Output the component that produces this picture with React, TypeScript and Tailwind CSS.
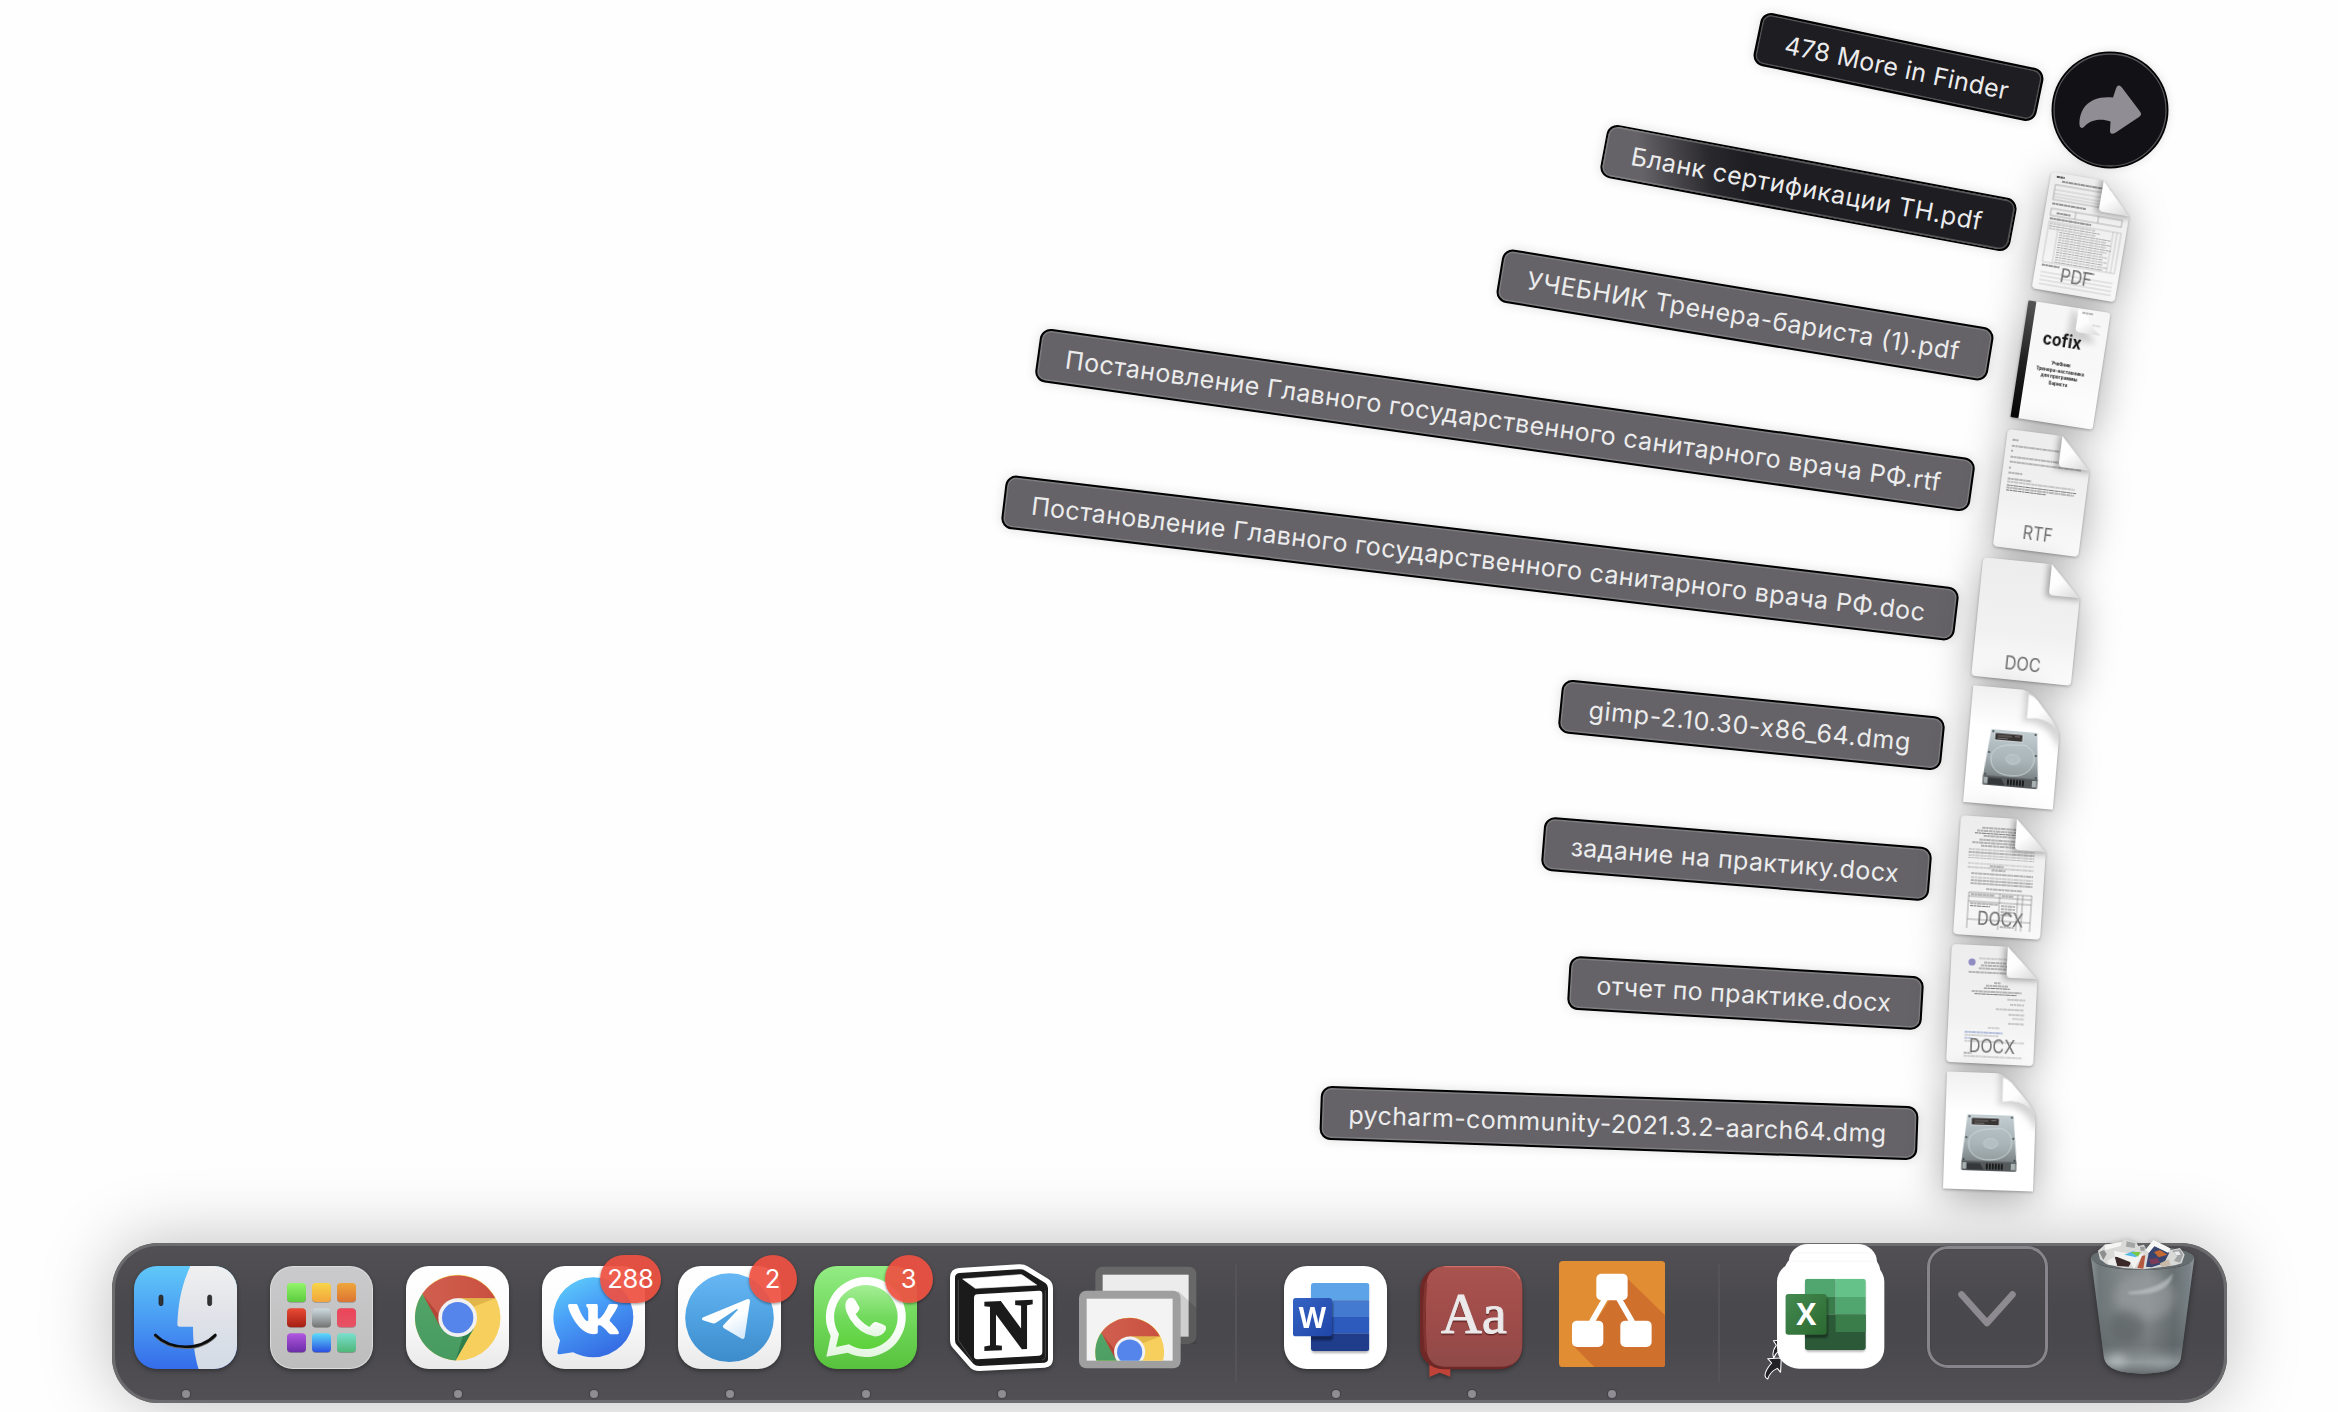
import { useLayoutEffect, useRef, useState, type ReactNode } from "react";
import { FaVk } from "react-icons/fa";

/* ---------- Stack labels ---------- */

type StackLabel = { text: string; box: string; tone: string; fit: number };

const GREY = "bg-[#656368]";
const DARK = "bg-[#1e1d22]";
const FADE = "bg-[linear-gradient(72deg,#656368_10%,#4c4a4f_17%,#29282d_27%,#1e1d22_36%)]";

const labels: StackLabel[] = [
  { text: "478 More in Finder", box: "left-[1754px] top-[40px] w-[289px] rotate-[11.8deg]", tone: DARK, fit: 228 },
  { text: "Бланк сертификации ТН.pdf", box: "left-[1600px] top-[161px] w-[417px] rotate-[10.6deg]", tone: FADE, fit: 357 },
  { text: "УЧЕБНИК Тренера-бариста (1).pdf", box: "left-[1496px] top-[288px] w-[498px] rotate-[9.35deg]", tone: GREY, fit: 438 },
  { text: "Постановление Главного государственного санитарного врача РФ.rtf", box: "left-[1033px] top-[393px] w-[944px] rotate-[8deg]", tone: GREY, fit: 884 },
  { text: "Постановление Главного государственного санитарного врача РФ.doc", box: "left-[1000px] top-[531px] w-[960px] rotate-[6.8deg]", tone: GREY, fit: 900 },
  { text: "gimp-2.10.30-x86_64.dmg", box: "left-[1559px] top-[698px] w-[385px] rotate-[5.7deg]", tone: GREY, fit: 324 },
  { text: "задание на практику.docx", box: "left-[1542px] top-[831.500px] w-[389px] rotate-[4.6deg]", tone: GREY, fit: 329 },
  { text: "отчет по практике.docx", box: "left-[1568px] top-[966px] w-[355px] rotate-[3.4deg]", tone: GREY, fit: 295 },
  { text: "pycharm-community-2021.3.2-aarch64.dmg", box: "left-[1320px] top-[1096px] w-[598px] rotate-[2deg]", tone: GREY, fit: 538 },
];

/* Spreads a single line of text over an exact width through its letter spacing. */
function FitText({ text, width }: { text: string; width: number }) {
  const ref = useRef<HTMLSpanElement>(null);
  const [spacing, setSpacing] = useState(0);
  useLayoutEffect(() => {
    const el = ref.current;
    if (el) setSpacing((width - el.offsetWidth) / text.length);
  }, [text, width]);
  return (
    <span ref={ref} className="whitespace-nowrap leading-none" style={{ letterSpacing: `${spacing}px` }}>
      {text}
    </span>
  );
}

function Label({ text, box, tone, fit }: StackLabel) {
  return (
    <div
      className={`absolute flex h-[54px] items-center justify-center rounded-[11px] border-2 border-black pr-[3px] pt-[2px] text-[25px] text-[#ececed] shadow-[inset_0_0_0_1.5px_rgba(160,160,160,0.42),0_0_12px_rgba(0,0,0,0.12)] ${box} ${tone}`}
    >
      <FitText text={text} width={fit} />
    </div>
  );
}

/* ---------- Stack files ---------- */

function File({ box, w, h, children }: { box: string; w: number; h: number; children: ReactNode }) {
  return (
    <div className={`absolute -ml-px ${box}`}>
      <svg
        viewBox={`0 0 ${w} ${h}`}
        className="block h-full w-full overflow-visible [filter:drop-shadow(0_1px_1.5px_rgba(0,0,0,0.3))_drop-shadow(0_8px_20px_rgba(0,0,0,0.34))]"
      >
        {children}
      </svg>
    </div>
  );
}

function Sheet({ w, h, f = 31, children }: { w: number; h: number; f?: number; children?: ReactNode }) {
  const clip = `sheet-${w}-${h}`;
  const outline = `M4 0H${w - f}L${w} ${f}V${h - 4}Q${w} ${h} ${w - 4} ${h}H4Q0 ${h} 0 ${h - 4}V4Q0 0 4 0Z`;
  return (
    <>
      <defs>
        <clipPath id={clip}>
          <path d={outline} />
        </clipPath>
      </defs>
      <path d={outline} fill="url(#paper)" />
      <g clipPath={`url(#${clip})`}>
        {children}
        <path d={`M${w - f - 3} -4V${f + 2}H${w + 4}Z`} fill="#000" opacity="0.32" filter="url(#soft)" />
      </g>
      <path d={`M${w - f} 0V${f - 4}Q${w - f} ${f} ${w - f + 4} ${f}H${w}Z`} fill="url(#fold)" />
    </>
  );
}

type Row = [number, number, number, number?];

function Rows({ rows, color = "#444", weight = 1.1 }: { rows: Row[]; color?: string; weight?: number }) {
  return (
    <g stroke={color} strokeWidth={weight}>
      {rows.map(([x, y, w, o], i) => (
        <line key={i} x1={x} x2={x + w} y1={y} y2={y} opacity={o ?? 0.7} strokeDasharray="3.5 0.5 2 0.5 5 0.6" />
      ))}
    </g>
  );
}

function Ext({ x, y, w, children }: { x: number; y: number; w: number; children: string }) {
  return (
    <text x={x - w / 2} y={y} textLength={w} lengthAdjust="spacingAndGlyphs" fontSize="18" fill="#6e6e6e" className="font-['Inter']">
      {children}
    </text>
  );
}

function DiskImage() {
  const sheet = "M0 0H46Q57 0 65 9L82 28Q90 37 90 48V117H0Z";
  return (
    <>
      <clipPath id="disk-sheet">
        <path d={sheet} />
      </clipPath>
      <path d={sheet} fill="#fff" />
      <g clipPath="url(#disk-sheet)">
        <rect width="90" height="40" fill="url(#curl)" />
        <path d="M52 -2Q54 22 52 32Q76 28 92 58L96 30L60 -6Z" fill="#000" opacity="0.16" filter="url(#soft)" />
      </g>
      <path d="M56 4V29Q76 24 88 39L82 28L65 9Q61 5 56 4Z" fill="url(#fold)" stroke="#d5d5d5" strokeWidth="0.7" />
      <path d="M22 42H68L72.500 89H17.500Z" fill="url(#drive)" />
      <path d="M17.500 88.500H72.500V96.500Q72.500 98 71 98H19Q17.500 98 17.500 96.500Z" fill="#55595b" />
      <path d="M22.500 90.500H36L40 97H22.500Z" fill="#34383a" />
      <rect x="18.500" y="90" width="4" height="6.500" fill="#a9b1b3" />
      <rect x="67" y="90" width="4.500" height="6.500" fill="#a9b1b3" />
      <g fill="#17191a">
        {[42, 45, 48, 51, 54, 57].map((x) => (
          <rect key={x} x={x} y="90.500" width="1.900" height="6" />
        ))}
      </g>
      <rect x="26" y="45" width="28" height="7.500" fill="#3a3535" stroke="#e2eaec" strokeWidth="0.8" />
      <path d="M29 48H43M29 50.500H39M46 47.500H51" stroke="#8c8988" strokeWidth="0.7" />
      <path
        d="M24 72C23 61 34 56 47 56C52 56 58 54 60 57C67 60 67.500 67 67 72C65 82 56 87 45 87C33 87 25 82 24 72Z"
        fill="#b4c0c4"
        fillOpacity="0.4"
        stroke="#cfdadd"
        strokeWidth="0.9"
      />
      <ellipse cx="46" cy="70.500" rx="7.200" ry="5" fill="#b3bfc2" stroke="#c9d4d7" strokeWidth="0.6" />
      <g fill="#3e484c">
        {[[24, 44], [66.500, 44], [21.500, 65], [68.500, 65], [19.500, 87], [70.500, 87]].map(([x, y]) => (
          <circle key={`${x}-${y}`} cx={x} cy={y} r="1.100" />
        ))}
      </g>
    </>
  );
}

function Files() {
  return (
    <>
      <File box="left-[2042px] top-[178px] h-[118px] w-[84px] rotate-[9.7deg]" w={84} h={118}>
        <Sheet w={84} h={118}>
          <Rows rows={[[6, 4, 8, 0.9]]} color="#111" weight={1.5} />
          <Rows rows={[[12, 8, 50, 0.9], [6, 31, 34, 0.9], [12, 40, 14, 0.9], [6, 46, 42, 0.9], [6, 93, 18, 0.9], [48, 94, 12, 0.8]]} color="#222" weight={1.2} />
          <g fill="none" stroke="#8a8a8a" strokeWidth="0.6">
            <rect x="6" y="12" width="62" height="15" />
            <path d="M6 17H68M6 21H68M6 24H68" opacity="0.6" />
            <rect x="6" y="36" width="72" height="7" />
            <path d="M31 36V43M54 36V43" />
            <rect x="6" y="49" width="73" height="41" opacity="0.6" />
            <path d="M16 57V90M71 49V90M75 49V90" opacity="0.6" />
            <path d="M6 100H79M6 104H79M6 108H79M6 112H79" opacity="0.6" />
          </g>
          <Rows rows={[51, 53.5, 56, 58.5, 61, 63.5, 66, 68.5, 71, 73.5, 76, 78.5, 81, 83.5, 86, 88.5].map((y, i): Row => [i > 2 ? 18 : 7, y, 46 + ((i * 5) % 9), 0.4])} />
          <Ext x={42} y={107} w={32}>PDF</Ext>
        </Sheet>
      </File>

      <File box="left-[2020px] top-[305.500px] h-[118px] w-[83px] rotate-[8.8deg]" w={83} h={118}>
        <rect width="83" height="118" rx="3" fill="url(#cover)" />
        <rect width="8" height="118" rx="1" fill="url(#spine)" />
        <path d="M45 0L73 33H43Z" fill="#000" opacity="0.16" filter="url(#soft)" />
        <text x="20" y="41" textLength="39" lengthAdjust="spacingAndGlyphs" fontSize="18" fontWeight="700" fill="#161616" className="font-['Inter']">
          cofix
        </text>
        <path d="M51 0V20Q51 24 55 24H77Q66 18 62 8Z" fill="url(#fold)" />
        <Rows rows={[[55, 4, 11, 0.7], [67, 15, 8, 0.3]]} />
        <g fontSize="4.600" fontWeight="700" fill="#1c1c1c" textAnchor="middle" className="font-['Inter']">
          <text x="42" y="60">Учебник</text>
          <text x="42" y="66.500">Тренера-наставника</text>
          <text x="42" y="73">для программы</text>
          <text x="42" y="79.500">Бариста</text>
        </g>
      </File>

      <File box="left-[2001px] top-[434px] h-[118px] w-[86px] rotate-[7.3deg]" w={86} h={118}>
        <Sheet w={86} h={118}>
          <Rows rows={[[6, 10, 6, 0.8], [6, 16, 48], [6, 21, 2], [6, 27, 50], [6, 32, 72], [6, 38, 2], [6, 43, 14], [6, 49, 24], [6, 52, 68, 0.5], [6, 55.5, 70, 0.7], [6, 58, 68, 0.7], [6, 60.5, 40, 0.7]]} />
          <Ext x={43} y={107.5} w={30}>RTF</Ext>
        </Sheet>
      </File>

      <File box="left-[1977.500px] top-[561.500px] h-[119px] w-[100px] rotate-[5.8deg]" w={100} h={119}>
        <Sheet w={100} h={119}>
          <Ext x={50} y={108.5} w={36}>DOC</Ext>
        </Sheet>
      </File>

      <File box="left-[1969px] top-[688.500px] h-[117px] w-[90px] rotate-[5deg]" w={90} h={117}>
        <DiskImage />
      </File>

      <File box="left-[1958px] top-[817.500px] h-[119px] w-[87px] rotate-[3.800deg]" w={87} h={119}>
        <Sheet w={87} h={119}>
          <Rows rows={[[22, 11, 34], [17, 14, 40], [15, 16.500, 42], [24, 19, 32], [20, 23, 36], [13, 26, 44], [22, 29, 34], [10, 33, 66, 0.4], [10, 36, 66, 0.7], [10, 39, 66, 0.4], [10, 41.500, 66, 0.3], [10, 47, 66, 0.3], [32, 49, 14], [10, 51, 66, 0.4], [34, 53, 14], [14, 57, 62], [14, 61, 62, 0.4], [14, 64, 62, 0.7], [14, 67, 62], [30, 72, 36, 0.7]]} />
          <g fill="none" stroke="#777" strokeWidth="0.6">
            <path d="M13 76H76M13 80H76M13 85H76M13 112V76M44 76V112M62 76V112M67 76V112M76 76V112M13 103H76" />
          </g>
          <Rows rows={[[15, 78, 24], [46, 78, 12], [15, 87, 28], [15, 89.500, 20], [46, 88, 14], [46, 91, 14], [46, 94, 14], [46, 97, 12], [46, 109, 14]]} />
          <Ext x={46} y={108} w={46}>DOCX</Ext>
        </Sheet>
      </File>

      <File box="left-[1950px] top-[946px] h-[118px] w-[87px] rotate-[2.800deg]" w={87} h={118}>
        <Sheet w={87} h={118}>
          <circle cx="21" cy="17" r="3.600" fill="#8f8cc4" />
          <Rows rows={[[28, 13, 28, 0.4], [33, 17, 22], [30, 20, 26], [28, 23, 28], [18, 27, 40], [44, 37, 7], [36, 40, 22], [34, 42.500, 26], [22, 46, 50], [25, 48.500, 42], [58, 53, 18, 0.5], [61, 58, 14, 0.5], [47, 63, 28, 0.5], [60, 68, 16, 0.5], [64, 72, 12, 0.4], [60, 77, 16, 0.5], [40, 82, 12, 0.4]]} />
          <Rows rows={[[17, 87, 38, 0.9], [17, 93, 8, 0.7]]} color="#5d78b8" />
          <Rows rows={[[17, 90, 34, 0.4], [17, 96, 60, 0.4], [17, 108, 8, 0.7], [17, 111, 58, 0.4]]} />
          <Ext x={45} y={107.5} w={46}>DOCX</Ext>
        </Sheet>
      </File>

      <File box="left-[1945.500px] top-[1072.500px] h-[117px] w-[90px] rotate-[1.950deg]" w={90} h={117}>
        <DiskImage />
      </File>
    </>
  );
}

function MoreButton() {
  return (
    <svg viewBox="0 0 118 118" className="absolute left-[2051px] top-[51px] h-[118px] w-[118px] overflow-visible [filter:drop-shadow(0_0_4px_rgba(0,0,0,0.12))]">
      <circle cx="59" cy="59" r="58.500" fill="#000" />
      <circle cx="59" cy="59" r="56" fill="#121116" stroke="#55545a" strokeWidth="1.300" />
      <path
        d="M28.500 74C28 58 38 44 62 46.500L65 37.500Q66.500 32.500 70.500 36L89 60.500Q91.500 63.500 88 66L64 82Q59 84.500 59 79.500L59.500 70.500C49 67 39 69 33 76Q29 78.500 28.500 74Z"
        fill="#908e94"
      />
    </svg>
  );
}

/* ---------- Dock icons ---------- */

const tile = "block h-[103px] w-[103px] overflow-visible [filter:drop-shadow(0_2px_2px_rgba(0,0,0,0.35))]";

function Finder() {
  return (
    <svg viewBox="104 139 309 309" className={tile}>
      <clipPath id="finder-tile"><rect x="104" y="139" width="309" height="309" rx="69" /></clipPath>
      <g clipPath="url(#finder-tile)">
        <rect x="104" y="139" width="309" height="309" fill="url(#finder-blue)" />
        <path d="M273 139C250 190 237 240 234 314Q234 321 240 321H281C281 370 286 410 298 449H414V139Z" fill="url(#finder-white)" />
      </g>
      <g fill="#333" stroke="#1a1a1a" strokeWidth="2">
        <rect x="179" y="226" width="12" height="32" rx="6" />
        <rect x="325" y="226" width="12" height="32" rx="6" />
      </g>
      <path d="M168 349C215 396 303 396 348 349" fill="none" stroke="#6c6c6c" strokeWidth="8" strokeLinecap="round" />
      <path d="M168 346C215 393 303 393 348 346" fill="none" stroke="#0c0c0c" strokeWidth="8" strokeLinecap="round" />
    </svg>
  );
}

const padColors = [
  ["#93f46c", "#5ccc3e"], ["#f8d548", "#f2a53c"], ["#efa63a", "#db7433"],
  ["#ea4b35", "#a41f14"], ["#cfdce2", "#747574"], ["#ec4459", "#e55465"],
  ["#b157e0", "#6b2da8"], ["#5cdbfa", "#2a4ee0"], ["#79dfcd", "#4fb678"],
];

function Launchpad() {
  return (
    <svg viewBox="512 139 309 309" className={tile}>
      <rect x="512" y="139" width="309" height="309" rx="69" fill="#dcdcdc" />
      <rect x="515" y="142" width="303" height="303" rx="66" fill="url(#pad)" />
      {padColors.map(([a, b], i) => {
        const x = 563 + (i % 3) * 75;
        const y = 190 + Math.floor(i / 3) * 75.5;
        return (
          <g key={a}>
            <linearGradient id={`pad-${i}`} x2="0" y2="1">
              <stop stopColor={a} />
              <stop offset="1" stopColor={b} />
            </linearGradient>
            <rect x={x} y={y + 2} width="57" height="57" rx="12" fill="#000" opacity="0.25" />
            <rect x={x} y={y} width="57" height="57" rx="12" fill={`url(#pad-${i})`} />
          </g>
        );
      })}
    </svg>
  );
}

function ChromeDisc() {
  return (
    <>
      <circle cx="1074" cy="294" r="128.500" fill="#f7cf5d" />
      <path d="M1187 236A128.500 128.500 0 0 0 968 222L1024 323L1074 236Z" fill="url(#chrome-red)" />
      <path d="M968 222A128.500 128.500 0 0 0 1068 422.500L1124 323L1024 323Z" fill="url(#chrome-green)" />
      <path d="M1074 236H1187L1120 262Z" fill="#d9aa41" opacity="0.7" />
      <path d="M968 222L1020 320L1017 285Z" fill="#9c3226" opacity="0.55" />
      <path d="M1068 422L1122 327L1090 348Z" fill="#1f6a3c" opacity="0.6" />
      <circle cx="1074" cy="294" r="58" fill="#f1f1f1" />
      <circle cx="1074" cy="294" r="47" fill="#5585ea" />
    </>
  );
}

function Chrome() {
  return (
    <svg viewBox="919 139 309 309" className={tile}>
      <rect x="919" y="139" width="309" height="309" rx="69" fill="url(#white)" />
      <ChromeDisc />
    </svg>
  );
}

function Vk() {
  return (
    <svg viewBox="68 139 309 309" className={tile}>
      <rect x="68" y="139" width="309" height="309" rx="69" fill="url(#white)" />
      <path d="M102 293A120 120 0 1 1 222 413Q190 413 161 398L122 404Q112 405 115 394L122 362Q102 330 102 293Z" fill="url(#vk)" />
      <FaVk x={141} y={217} size={163} color="#fff" />
    </svg>
  );
}

function Telegram() {
  return (
    <svg viewBox="476 139 309 309" className={tile}>
      <rect x="476" y="139" width="309" height="309" rx="69" fill="url(#white)" />
      <circle cx="630.500" cy="294" r="133" fill="url(#tg)" />
      <path
        d="M552 293L683 239Q692 236 692 245L676 352Q674 361 665 356L614 326Q608 322 612 317L655 271Q656 267 651 269L590 309Q584 313 577 310L551 302Q544 298 552 293Z"
        fill="url(#plane)"
      />
    </svg>
  );
}

function WhatsApp() {
  return (
    <svg viewBox="884 139 309 309" className={tile}>
      <rect x="884" y="139" width="309" height="309" rx="69" fill="url(#wa)" />
      <path d="M1040 172A120 120 0 1 1 985 399L921 411L934 349A120 120 0 0 1 1040 172Z" fill="url(#wa-ring)" />
      <path d="M1040 196A96 96 0 1 1 989 374L950 382L959 343A96 96 0 0 1 1040 196Z" fill="url(#wa-in)" />
      <path
        d="M988 236Q1003 230 1009 243L1020 263Q1023 270 1009 283Q1022 306 1050 322Q1059 310 1066 307Q1073 305 1098 318Q1103 324 1097 335Q1086 352 1064 350Q1020 342 992 298Q971 262 981 244Z"
        fill="url(#wa-ring)"
      />
    </svg>
  );
}

function Notion() {
  const cube =
    "M107 174Q107 162 120 160L298 149Q310 148 318 153L378 190Q386 196 386 205V418Q386 428 375 429L180 439Q168 439 162 432L112 375Q107 370 107 360Z";
  return (
    <svg viewBox="92 139 309 309" className={tile}>
      <path d={cube} fill="#fff" stroke="#fff" strokeWidth="30" strokeLinejoin="round" />
      <path d={cube} fill="#1b1b1b" />
      <path d="M117 180V362L160 424" fill="none" stroke="#4a4a4a" strokeWidth="3" />
      <path d="M130 178L300 165Q306 164 312 168L352 196L168 206Z" fill="#fff" stroke="#fff" strokeWidth="2" strokeLinejoin="round" />
      <path d="M174 224L359 213Q369 212 369 223V397Q369 407 359 408L174 419Q164 419 164 409V235Q164 225 174 224Z" fill="#fff" />
      <path d="M378 212V412Q377 420 368 421" fill="none" stroke="#4a4a4a" strokeWidth="3" />
      <text x="0" y="0" transform="translate(194 391) skewY(-2.500)" fontSize="216" fontWeight="700" textLength="146" lengthAdjust="spacingAndGlyphs" fill="#1b1b1b" stroke="#1b1b1b" strokeWidth="6" className="font-['Liberation_Serif']">
        N
      </text>
    </svg>
  );
}

function RemoteDesktop() {
  return (
    <svg viewBox="478 139 352 309" className="block h-[103px] w-[117.300px] overflow-visible">
      <rect x="527" y="141" width="303" height="232" rx="22" fill="#686868" />
      <rect x="549" y="165" width="258" height="186" fill="#ececec" />
      <path d="M775 213L830 265V373H783Z" fill="#000" opacity="0.12" />
      <rect x="478" y="213" width="305" height="233" rx="22" fill="#9f9f9f" />
      <rect x="501" y="237" width="258" height="186" fill="#f3f3f3" />
      <clipPath id="remote-screen"><rect x="501" y="237" width="258" height="186" /></clipPath>
      <g clipPath="url(#remote-screen)">
        <g transform="translate(630 397) scale(0.805) translate(-1074 -294)">
          <ChromeDisc />
        </g>
      </g>
    </svg>
  );
}

function Word() {
  return (
    <svg viewBox="73 139 309 309" className={tile}>
      <rect x="73" y="139" width="309" height="309" rx="69" fill="#fff" />
      <clipPath id="word-page"><rect x="154" y="190" width="175" height="204" rx="8" /></clipPath>
      <rect x="156" y="196" width="171" height="204" rx="8" fill="#000" opacity="0.3" filter="url(#soft)" />
      <g clipPath="url(#word-page)">
        <rect x="154" y="190" width="175" height="52" fill="#5da3e8" />
        <rect x="154" y="242" width="175" height="50" fill="#447ad0" />
        <rect x="154" y="292" width="175" height="50" fill="#2d5abd" />
        <rect x="154" y="342" width="175" height="52" fill="#203d8c" />
        <rect x="108" y="244" width="112" height="118" rx="10" fill="#000" opacity="0.4" filter="url(#soft)" />
      </g>
      <rect x="100" y="235" width="117" height="115" rx="8" fill="url(#word-tab)" />
      <text x="117.500" y="324" fontSize="88" fontWeight="700" textLength="82" lengthAdjust="spacingAndGlyphs" fill="#fff" className="font-['Open_Sans']">
        W
      </text>
    </svg>
  );
}

function Dictionary() {
  return (
    <svg viewBox="482 139 309 309" className={tile}>
      <path d="M510 430H573V471L541 459L510 472Z" fill="#bf4338" />
      <rect x="482" y="141" width="307" height="308" rx="69" fill="#6f2826" />
      <path d="M553 139H720Q789 139 789 208V372Q789 441 720 441H553Q500 436 500 372V208Q500 145 553 139Z" fill="url(#leather)" />
      <path d="M555 141H720Q765 141 781 178" fill="none" stroke="#d9716c" strokeWidth="3" />
      <path d="M500 190Q490 290 500 395" fill="none" stroke="#823431" strokeWidth="8" />
      <g fontSize="168" strokeWidth="3" className="font-['Liberation_Serif']">
        <text x="545" y="341" textLength="198" lengthAdjust="spacingAndGlyphs" fill="#ebe9e9" stroke="#ebe9e9" className="[filter:drop-shadow(0_4px_1px_#5f2220)]">
          Aa
        </text>
      </g>
    </svg>
  );
}

function DrawIo() {
  return (
    <svg viewBox="897 122 319 319" className="-mt-[5.500px] block h-[106.300px] w-[106.300px]">
      <clipPath id="drawio-tile"><rect x="897" y="122" width="319" height="319" rx="12" /></clipPath>
      <g clipPath="url(#drawio-tile)">
        <rect x="897" y="122" width="319" height="319" fill="#e08d33" />
        <path d="M1100 172L1216 286V441H1004L940 376L1010 300L1060 220Z" fill="#cf702d" />
      </g>
      <path d="M1041 225L995 305M1071 225L1117 305" stroke="#fff" strokeWidth="17" />
      <rect x="1009" y="160" width="94" height="80" rx="15" fill="#fff" />
      <rect x="936" y="301" width="94" height="79" rx="15" fill="#fff" />
      <rect x="1081" y="301" width="94" height="79" rx="15" fill="#fff" />
    </svg>
  );
}

function ExcelStack() {
  return (
    <svg viewBox="242 132 301 375" preserveAspectRatio="none" className="block h-[125px] w-[107.500px] overflow-visible">
      <g fill="#222125" stroke="#fff" strokeWidth="3" strokeLinejoin="round">
        <path d="M232 422L262 420V470L248 452Q238 460 233 474Q226 455 240 436Z" />
        <path d="M216 476L254 474L252 517L243 505Q222 515 216 537Q202 532 214 508Q220 497 227 489Z" />
      </g>
      <rect x="275" y="132" width="247" height="220" rx="54" fill="#fff" />
      <rect x="262" y="157" width="270" height="220" rx="62" fill="#fff" />
      <rect x="242" y="184" width="300.500" height="322" rx="62" fill="#fff" />
      <path d="M300 158H500M285 184H515" stroke="#f4f4f4" strokeWidth="2" />
      <clipPath id="excel-page"><rect x="320" y="236" width="170.500" height="214" rx="8" /></clipPath>
      <rect x="322" y="243" width="167" height="212" rx="8" fill="#000" opacity="0.3" filter="url(#soft)" />
      <g clipPath="url(#excel-page)">
        <rect x="320" y="236" width="86" height="55" fill="#51a56e" />
        <rect x="406" y="236" width="85" height="55" fill="#65c38a" />
        <rect x="320" y="291" width="86" height="53" fill="#3a7c4a" />
        <rect x="406" y="291" width="85" height="53" fill="#51a56e" />
        <rect x="320" y="344" width="171" height="106" fill="#2c5a39" />
        <rect x="406" y="344" width="85" height="52" fill="#3a7c4a" />
        <rect x="275" y="292" width="110" height="122" rx="10" fill="#000" opacity="0.4" filter="url(#soft)" />
      </g>
      <rect x="266" y="282" width="115" height="122" rx="8" fill="url(#excel-tab)" />
      <text x="296" y="376" fontSize="92" fontWeight="700" textLength="56" lengthAdjust="spacingAndGlyphs" fill="#fff" className="font-['Open_Sans']">
        X
      </text>
    </svg>
  );
}

function DownloadsStack() {
  return (
    <div className="flex h-[122px] w-[121px] items-center justify-center rounded-[21px] border-[3px] border-[#87858b] shadow-[0_0_1px_#29282b,inset_0_0_1px_#29282b]">
      <svg viewBox="0 0 58 36" className="mt-[3px] h-[36px] w-[58px] overflow-visible" fill="none" stroke="#8d8b91" strokeWidth="6.500" strokeLinecap="round" strokeLinejoin="round">
        <path d="M3.500 3.500L29 32L54.500 3.500" />
      </svg>
    </div>
  );
}

function Trash() {
  const bin = "M33 84L72 385Q82 431 188 431Q294 431 303 385L343 84Q330 118 188 120Q46 118 33 84Z";
  return (
    <svg viewBox="33 27 310 404" className="block h-[134.700px] w-[103.300px] overflow-visible [filter:drop-shadow(0_2px_3px_rgba(0,0,0,0.4))]">
      <ellipse cx="188" cy="84" rx="155" ry="36" fill="#666d70" />
      <clipPath id="bin-shape"><path d={bin} /></clipPath>
      <path d={bin} fill="url(#bin)" />
      <g clipPath="url(#bin-shape)">
        <path d={bin} fill="url(#bin-v)" />
        <ellipse cx="195" cy="200" rx="90" ry="70" fill="#9da2a3" opacity="0.55" filter="url(#wide)" />
        <path d="M145 186Q245 175 280 128Q270 200 145 192Z" fill="#c4c9ca" opacity="0.6" filter="url(#soft)" />
        <ellipse cx="140" cy="290" rx="50" ry="50" fill="#4e5353" opacity="0.4" filter="url(#wide)" />
        <ellipse cx="110" cy="392" rx="30" ry="16" fill="#c9cfd1" opacity="0.7" filter="url(#wide)" />
        <ellipse cx="250" cy="400" rx="36" ry="12" fill="#a5adb0" opacity="0.6" filter="url(#wide)" />
      </g>
      <path d="M54 62L74 44L125 36L135 27L170 38L175 48L192 44L198 58L220 30L265 52L272 60L300 54L314 74L305 100L285 106L240 112L190 118L130 114L80 103L60 88Z" fill="#d9d9d8" />
      <path d="M58 66L72 60L80 72L70 90Z" fill="#8b8d8e" />
      <path d="M74 44L125 36L122 48L76 60Z" fill="#f5f5f4" />
      <path d="M104 82L128 76L154 96L146 110L112 108Z" fill="#3b2929" />
      <path d="M102 62L176 76L192 68L162 116L150 96L104 78Z" fill="#f2f2f1" />
      <path d="M133 74L158 64L180 68L168 82Z" fill="#58b9e8" />
      <path d="M152 66L182 66L174 80Z" fill="#7bc845" />
      <path d="M172 114L186 78L196 76L190 116Z" fill="#b4583f" />
      <path d="M140 34L166 40L164 54L138 50Z" fill="#a4a5a5" />
      <path d="M180 50H194V62H182Z" fill="#9b9b9b" />
      <path d="M198 110L206 70L222 48L268 68L252 100L215 112Z" fill="#39456f" />
      <path d="M222 66L240 60L262 74L236 82Z" fill="#c66a34" />
      <path d="M206 88L232 84L240 98L214 104Z" fill="#7a3c56" />
      <path d="M220 30L272 56L264 68L224 48L206 68L198 60Z" fill="#f7f7f6" />
      <path d="M240 100L266 88L272 106L244 112Z" fill="#c9b9a8" />
      <path d="M276 62L300 58L310 74L300 98L282 92L292 78Z" fill="#a2a4a5" />
      <path d="M282 66L296 64L302 74L290 76Z" fill="#ededed" />
      <path d="M82 92L104 80L110 106L86 104Z" fill="#ededec" />
    </svg>
  );
}

/* ---------- Dock ---------- */

function Badge({ children }: { children: string }) {
  return (
    <span className="absolute -right-[15.500px] -top-[11.500px] flex h-[48px] min-w-[48px] items-center justify-center rounded-full bg-[#ee5142]/93 px-[7px] text-[25.500px] leading-none tracking-[-0.3px] text-white shadow-[0_1px_3px_rgba(0,0,0,0.45)]">
      {children}
    </span>
  );
}

function Cell({ running, badge, children }: { running?: boolean; badge?: string; children: ReactNode }) {
  return (
    <div className="flex h-[160px] flex-col items-center pt-[23px]">
      <div className="relative flex h-[103px] items-start">
        {children}
        {badge && <Badge>{badge}</Badge>}
      </div>
      {running && <span className="mt-[21px] h-[8px] w-[8px] rounded-full bg-[#8f8d94] shadow-[0_0_1px_1px_rgba(50,48,54,0.5)]" />}
    </div>
  );
}

function Separator() {
  return <div className="mt-[21px] h-[118px] w-[2px] bg-[#555358]" />;
}

function Dock() {
  return (
    <nav className="flex h-[160px] w-[2115px] items-start rounded-[46px] bg-[linear-gradient(#525055,#49484c_40%,#49484c_60%,#525055)] pl-[22.500px] shadow-[inset_0_0_0_3px_#6c6b6e,0_0_70px_rgba(0,0,0,0.26)]">
      <div className="flex gap-[33px]">
        <Cell running><Finder /></Cell>
        <Cell><Launchpad /></Cell>
        <Cell running><Chrome /></Cell>
        <Cell running badge="288"><Vk /></Cell>
        <Cell running badge="2"><Telegram /></Cell>
        <Cell running badge="3"><WhatsApp /></Cell>
        <Cell running><Notion /></Cell>
      </div>
      <div className="ml-[26px] flex">
        <Cell><RemoteDesktop /></Cell>
      </div>
      <div className="ml-[39px]"><Separator /></div>
      <div className="ml-[47px] flex gap-[33px]">
        <Cell running><Word /></Cell>
        <Cell running><Dictionary /></Cell>
      </div>
      <div className="ml-[35.500px]">
        <Cell running><DrawIo /></Cell>
      </div>
      <div className="ml-[52.500px]"><Separator /></div>
      <div className="ml-[57px] mt-[1px]"><ExcelStack /></div>
      <div className="ml-[42.500px] mt-[3px]"><DownloadsStack /></div>
      <div className="-mt-[4px] ml-[43.500px]"><Trash /></div>
    </nav>
  );
}

/* ---------- Shared paints ---------- */

function Grad({ id, stops, x2 = 0, y2 = 1 }: { id: string; stops: [number, string, number?][]; x2?: number; y2?: number }) {
  return (
    <linearGradient id={id} x1="0" y1="0" x2={x2} y2={y2}>
      {stops.map(([o, c, a], i) => (
        <stop key={i} offset={o} stopColor={c} stopOpacity={a ?? 1} />
      ))}
    </linearGradient>
  );
}

function Paints() {
  return (
    <svg className="absolute h-0 w-0" aria-hidden="true">
      <defs>
        <filter id="soft" x="-30%" y="-30%" width="160%" height="160%"><feGaussianBlur stdDeviation="3" /></filter>
        <filter id="wide" x="-100%" y="-100%" width="300%" height="300%"><feGaussianBlur stdDeviation="14" /></filter>
        <Grad id="paper" stops={[[0, "#ededed"], [0.6, "#f1f1f1"], [1, "#fcfcfc"]]} />
        <Grad id="cover" stops={[[0, "#f6f6f6"], [0.5, "#f8f8f8"], [1, "#ffffff"]]} />
        <Grad id="spine" stops={[[0, "#555"], [0.5, "#222"], [1, "#050505"]]} />
        <Grad id="fold" x2={0.8} stops={[[0, "#ffffff"], [0.5, "#fdfdfd"], [1, "#dedede"]]} />
        <Grad id="curl" stops={[[0, "#f0f0f0"], [1, "#ffffff"]]} />
        <Grad id="drive" stops={[[0, "#c3ced2"], [0.6, "#a3aeb2"], [1, "#7a8285"]]} />
        <Grad id="finder-blue" stops={[[0, "#60c8f8"], [0.5, "#4a9df3"], [1, "#356cea"]]} />
        <Grad id="finder-white" stops={[[0, "#f0f0f1"], [0.5, "#dfe2e8"], [1, "#d2dbe6"]]} />
        <Grad id="pad" stops={[[0, "#cacacc"], [1, "#bdbdbd"]]} />
        <Grad id="white" stops={[[0, "#ffffff"], [0.5, "#fbfbfb"], [1, "#e9e9e9"]]} />
        <Grad id="chrome-red" x2={1} y2={0} stops={[[0, "#d05f50"], [1, "#c95040"]]} />
        <Grad id="chrome-green" stops={[[0, "#52a468"], [1, "#479a60"]]} />
        <Grad id="vk" x2={0.5} stops={[[0, "#62d5fb"], [0.5, "#489df7"], [1, "#366fe4"]]} />
        <Grad id="tg" stops={[[0, "#68b7f5"], [0.5, "#4fa2e1"], [1, "#3d8bcb"]]} />
        <Grad id="plane" x2={0.7} stops={[[0, "#ffffff"], [0.6, "#ffffff"], [1, "#d8ebfb"]]} />
        <Grad id="wa" stops={[[0, "#93ec84"], [0.5, "#72d95c"], [1, "#58c23d"]]} />
        <Grad id="wa-in" stops={[[0, "#a5ee95"], [0.5, "#72da5e"], [1, "#5cd23a"]]} />
        <Grad id="wa-ring" stops={[[0, "#ffffff"], [0.6, "#fbfefa"], [1, "#e2f5df"]]} />
        <Grad id="word-tab" x2={1} stops={[[0, "#3464c4"], [1, "#2045a8"]]} />
        <Grad id="leather" stops={[[0, "#a9534f"], [0.5, "#a04c4a"], [1, "#8f4a48"]]} />
        <Grad id="excel-tab" x2={1} stops={[[0, "#448a52"], [1, "#2b692f"]]} />
        <Grad id="bin" y2={0} x2={1} stops={[[0, "#8b9396"], [0.08, "#717a7d"], [0.3, "#858b8d"], [0.55, "#8b9192"], [0.8, "#6b7275"], [0.95, "#7c868a"], [1, "#929ca0"]]} />
        <Grad id="bin-v" stops={[[0, "#4f5659", 0.05], [0.45, "#4c5153", 0.1], [0.75, "#4c5153", 0.35], [0.9, "#9da5a8", 0.5], [1, "#4f5659", 0.6]]} />
      </defs>
    </svg>
  );
}

export default function App() {
  return (
    <main className="relative flex h-[1412px] w-[2338px] flex-col items-center justify-end overflow-hidden bg-[#fefefe] pb-[9px] font-['Inter',sans-serif]">
      <Paints />
      <Dock />
      {labels.map((label) => (
        <Label key={label.text} {...label} />
      ))}
      <MoreButton />
      <Files />
    </main>
  );
}
